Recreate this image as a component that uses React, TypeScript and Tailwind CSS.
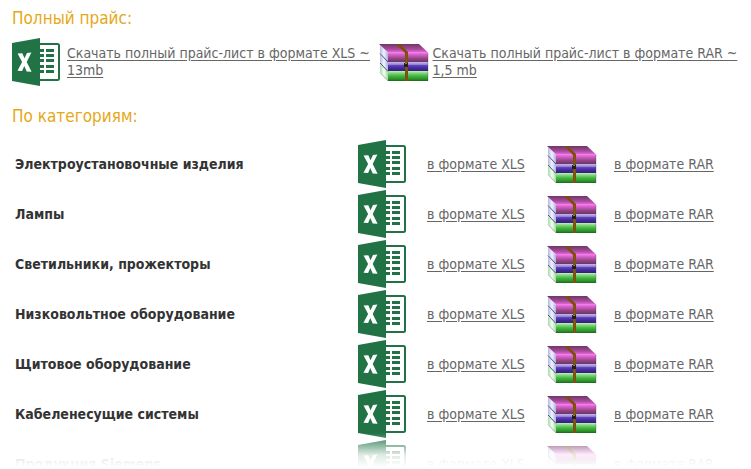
const categories = [
  'Электроустановочные изделия',
  'Лампы',
  'Светильники, прожекторы',
  'Низковольтное оборудование',
  'Щитовое оборудование',
  'Кабеленесущие системы',
  'Продукция Siemens',
];

function ExcelIcon() {
  return (
    <svg className="block h-12 w-12 shrink-0" viewBox="0 0 48 48" aria-hidden="true">
      <rect x="20" y="6" width="27" height="36" rx="1.5" fill="#fff" stroke="#217346" strokeWidth="2" />
      <g fill="#217346">
        <path d="M28 11h4v3h-4zM28 16h4v3h-4zM28 21h4v3h-4zM28 27h4v3h-4zM28 32h4v3h-4z" />
        <path d="M34 11h8v3h-8zM34 16h8v3h-8zM34 21h8v3h-8zM34 27h8v3h-8zM34 32h8v3h-8z" />
        <path d="M0 5 28 0V48L0 43z" />
      </g>
      <path
        d="M5.600 15.600 10.300 15.200l2.200 5L15 14.900l4.400-.3-4.700 9.500 4.900 9.600-4.900-.3-2.400-5.400-2.200 5.100-4.600-.3 4.600-8.700z"
        fill="#fff"
      />
    </svg>
  );
}

function RarIcon() {
  return (
    <svg className="block h-10 w-[50px] shrink-0" viewBox="0 -2 50 40" aria-hidden="true">
      <defs>
        <linearGradient id="rar-lid" x1="0" y1="0" x2="0" y2="1">
          <stop offset="0" stopColor="#6f3568" />
          <stop offset=".6" stopColor="#a64c9a" />
          <stop offset="1" stopColor="#e86ade" />
        </linearGradient>
        <linearGradient id="rar-top" x1="0" y1="0" x2="0" y2="1">
          <stop offset="0" stopColor="#ff80fa" />
          <stop offset=".25" stopColor="#d862cb" />
          <stop offset=".65" stopColor="#944587" />
          <stop offset="1" stopColor="#6a3562" />
        </linearGradient>
        <linearGradient id="rar-middle" x1="0" y1="0" x2="0" y2="1">
          <stop offset="0" stopColor="#c7b9ee" />
          <stop offset=".27" stopColor="#9a85d6" />
          <stop offset=".4" stopColor="#5a3fb8" />
          <stop offset=".7" stopColor="#43289b" />
          <stop offset="1" stopColor="#332070" />
        </linearGradient>
        <linearGradient id="rar-bottom" x1="0" y1="0" x2="0" y2="1">
          <stop offset="0" stopColor="#c0f0bd" />
          <stop offset=".27" stopColor="#75cf70" />
          <stop offset=".5" stopColor="#43b63e" />
          <stop offset=".8" stopColor="#2d922b" />
          <stop offset="1" stopColor="#1d661e" />
        </linearGradient>
        <linearGradient id="rar-blue-pages" x1="0" y1="0" x2="1" y2="0">
          <stop offset="0" stopColor="#b4b8e4" />
          <stop offset=".5" stopColor="#f1f3ff" />
          <stop offset="1" stopColor="#a9aee0" />
        </linearGradient>
        <linearGradient id="rar-green-pages" x1="0" y1="0" x2="1" y2="0">
          <stop offset="0" stopColor="#a6dca7" />
          <stop offset=".5" stopColor="#f2fff2" />
          <stop offset="1" stopColor="#a4daa5" />
        </linearGradient>
      </defs>
      <path d="M1 1v8l8 9V9z" fill="url(#rar-blue-pages)" />
      <path d="M1 10v9l8 8v-9z" fill="url(#rar-blue-pages)" />
      <path d="M1 20v8l8 9V27z" fill="url(#rar-green-pages)" />
      <path d="M0 0h40l9 8.500H9z" fill="url(#rar-lid)" />
      <path d="M9 8h40v10H9z" fill="url(#rar-top)" />
      <path d="M9 18h40v9H9z" fill="url(#rar-middle)" />
      <path d="M9 27h40v10H9z" fill="url(#rar-bottom)" />
      <path d="M1 9.500 9 18M1 19l8 8.500" stroke="#4d4a78" fill="none" />
      <path d="M1 28.500 9 37" stroke="#a8b4a8" fill="none" />
      <path d="M49 9v28" fill="none" stroke="#302050" strokeOpacity=".25" />
      <path d="M17 0h4l8 8V37h-3V9z" fill="#7d4f0c" />
      <path d="M27 9h1v28h-1z" fill="#85560e" />
      <path d="M25 19h4v4h-4z" fill="#202020" />
      <path d="M26 19h2v1h-2z" fill="#817c74" />
    </svg>
  );
}

const link = 'text-[#666] underline underline-offset-2 hover:no-underline';
const heading = 'text-[17px] leading-6 text-[#e6a817]';

export default function App() {
  return (
    <main className="relative h-screen overflow-hidden bg-white px-3 pt-1.5 font-['DejaVu_Sans_Condensed','DejaVu_Sans',sans-serif] text-sm text-[#333] [font-stretch:condensed]">
      <h2 className={heading}>Полный прайс:</h2>
      <div className="mt-1 flex items-center">
        <div className="flex w-1/2 items-center gap-[7px] pt-1">
          <ExcelIcon />
          <a href="#full-xls" className={`${link} leading-[17px]`}>
            Скачать полный прайс-лист в формате XLS ~ 13mb
          </a>
        </div>
        <div className="flex w-1/2 items-center gap-1 pl-[3px] pt-1">
          <RarIcon />
          <a href="#full-rar" className={`${link} leading-[17px]`}>
            Скачать полный прайс-лист в формате RAR ~ 1,5 mb
          </a>
        </div>
      </div>

      <h2 className={`${heading} mt-[18px]`}>По категориям:</h2>
      <table className="mt-[11px] w-full table-fixed border-collapse">
        <colgroup>
          <col />
          <col className="w-[69px]" />
          <col className="w-[120px]" />
          <col className="w-[67px]" />
          <col className="w-[125px]" />
        </colgroup>
        <tbody>
          {categories.map((name) => (
            <tr key={name} className="h-[50px]">
              <th scope="row" className="p-0 pl-[3px] text-left font-bold">{name}</th>
              <td className="p-0"><ExcelIcon /></td>
              <td className="p-0"><a href="#xls" className={link}>в формате XLS</a></td>
              <td className="p-0"><RarIcon /></td>
              <td className="p-0"><a href="#rar" className={link}>в формате RAR</a></td>
            </tr>
          ))}
        </tbody>
      </table>
      <div className="pointer-events-none absolute inset-x-0 bottom-0 h-9 bg-linear-to-b from-white/0 via-white/85 via-60% to-white to-95%" />
    </main>
  );
}
